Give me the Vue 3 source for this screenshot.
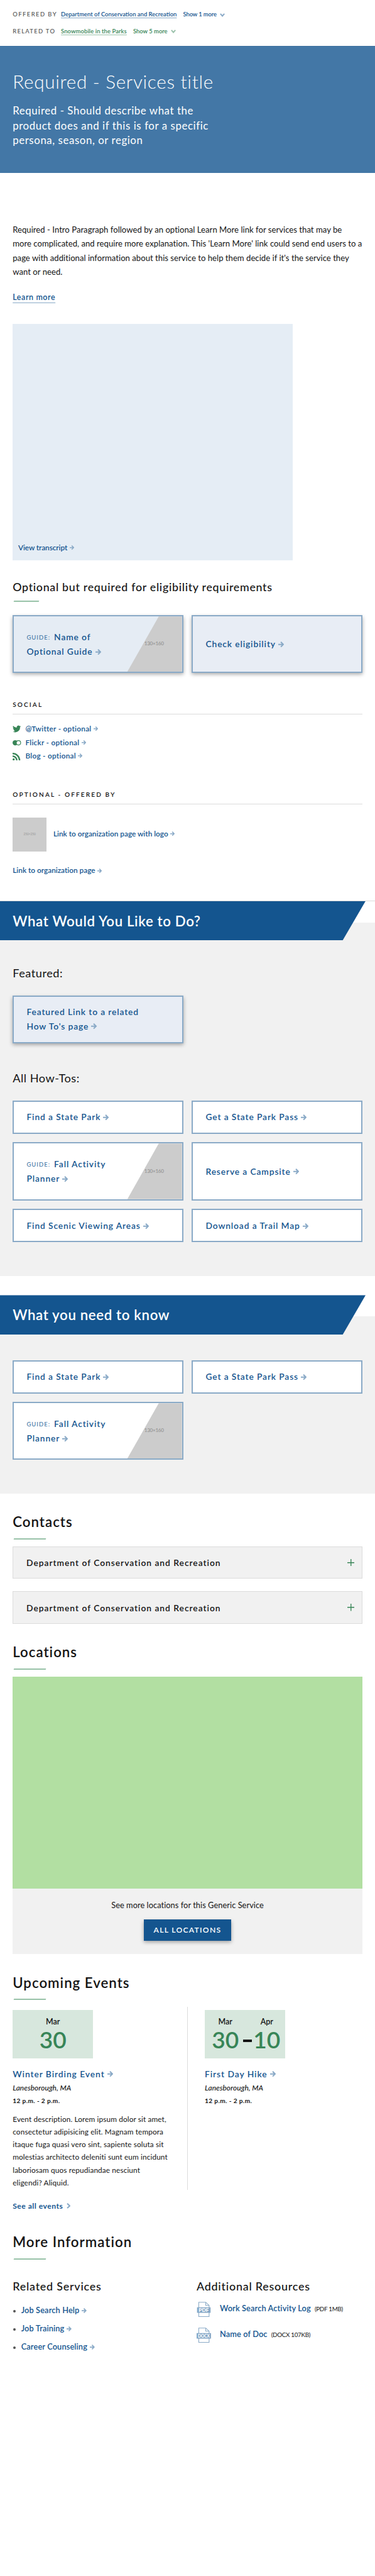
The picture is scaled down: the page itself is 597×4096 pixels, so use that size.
<script setup>
import { h } from 'vue'

const Arrow = () =>
  h('svg', { class: 'arrow', viewBox: '0 0 14 14', 'aria-hidden': 'true' }, [
    h('path', {
      d: 'M0 7H10M6 1.2L11.8 7L6 12.8',
      fill: 'none',
      stroke: '#8aaac7',
      'stroke-width': 3,
    }),
  ])

const howTos = [
  { text: 'Find a State Park' },
  { text: 'Get a State Park Pass' },
  { guide: true, lines: ['Fall Activity', 'Planner'] },
  { text: 'Reserve a Campsite' },
  { text: 'Find Scenic Viewing Areas' },
  { text: 'Download a Trail Map' },
]
const needToKnow = howTos.slice(0, 3)
const contacts = ['Department of Conservation and Recreation', 'Department of Conservation and Recreation']
const description = [
  'Event description. Lorem ipsum dolor sit amet,',
  'consectetur adipisicing elit. Magnam tempora',
  'itaque fuga quasi vero sint, sapiente soluta sit',
  'molestias architecto deleniti sunt eum incidunt',
  'laboriosam quos repudiandae nesciunt',
  'eligendi? Aliquid.',
]
const related = ['Job Search Help', 'Job Training', 'Career Counseling']
const resources = [
  { type: 'PDF', name: 'Work Search Activity Log', meta: '(PDF 1MB)' },
  { type: 'DOCX', name: 'Name of Doc', meta: '(DOCX 107KB)' },
]
</script>

<template>
  <main class="page">
    <div class="relations">
      <div class="relation">
        <span class="relation-label">OFFERED BY</span>
        <a class="relation-link">Department of Conservation and Recreation</a>
        <span class="relation-more">Show 1 more</span>
        <svg class="chev" viewBox="0 0 12 9"><path d="M1.3 1.3L6 6.6L10.7 1.3" fill="none" stroke="#8aaac7" stroke-width="3" /></svg>
      </div>
      <div class="relation green">
        <span class="relation-label">RELATED TO</span>
        <a class="relation-link">Snowmobile in the Parks</a>
        <span class="relation-more">Show 5 more</span>
        <svg class="chev" viewBox="0 0 12 9"><path d="M1.3 1.3L6 6.6L10.7 1.3" fill="none" stroke="#9bc2ab" stroke-width="3" /></svg>
      </div>
    </div>

    <header class="hero">
      <h1>Required - Services title</h1>
      <p>Required - Should describe what the<br />product does and if this is for a specific<br />persona, season, or region</p>
    </header>

    <section class="intro">
      <p class="lead">
        Required - Intro Paragraph followed by an optional Learn More link for services that may be<br />
        more complicated, and require more explanation. This 'Learn More' link could send end users to a<br />
        page with additional information about this service to help them decide if it's the service they<br />
        want or need.
      </p>
      <div class="learn"><a>Learn more</a></div>
      <div class="video"><a class="small-link transcript">View transcript<Arrow /></a></div>

      <h3 class="sub">Optional but required for eligibility requirements</h3>
      <div class="bar short"></div>
      <div class="cards lead-cards">
        <div class="card featured tinted">
          <span><small class="guide">GUIDE:</small>Name of<br />Optional Guide<Arrow /></span>
          <div class="slash"><i>130×160</i></div>
        </div>
        <div class="card featured"><span>Check eligibility<Arrow /></span></div>
      </div>

      <h4 class="caps">SOCIAL</h4>
      <ul class="social">
        <li>
          <svg viewBox="0 0 24 20"><path d="M23.6 2.6c-.9.4-1.8.6-2.7.7 1-.6 1.7-1.5 2.1-2.6-.9.5-1.9.9-3 1.2a4.8 4.8 0 0 0-8.2 4.4C7.800 6.100 4.200 4.200 1.800 1.200a4.8 4.8 0 0 0 1.5 6.4c-.8 0-1.5-.2-2.2-.6 0 2.4 1.7 4.3 3.9 4.8-.7.2-1.4.2-2.2.1.6 1.900 2.400 3.300 4.500 3.300A9.7 9.7 0 0 1 .2 17.200 13.700 13.700 0 0 0 21.200 5c1-.7 1.800-1.500 2.400-2.400z" fill="#388557" /></svg>
          <a class="small-link">@Twitter - optional<Arrow /></a>
        </li>
        <li>
          <svg viewBox="0 0 20 18"><circle cx="6.200" cy="9" r="6.200" fill="#388557" /><circle cx="14" cy="9" r="5.200" fill="#fff" stroke="#388557" stroke-width="1.700" /></svg>
          <a class="small-link">Flickr - optional<Arrow /></a>
        </li>
        <li>
          <svg viewBox="0 0 20 18"><circle cx="2.500" cy="15.500" r="2.500" fill="#388557" /><path d="M0 8a10 10 0 0 1 10 10M0 1.800A16.200 16.200 0 0 1 16.500 18" fill="none" stroke="#388557" stroke-width="3.400" /></svg>
          <a class="small-link">Blog - optional<Arrow /></a>
        </li>
      </ul>

      <h4 class="caps offered">OPTIONAL - OFFERED BY</h4>
      <div class="org">
        <div class="logo">250×250</div>
        <a class="small-link">Link to organization page with logo<Arrow /></a>
      </div>
      <div class="org-plain"><a class="small-link">Link to organization page<Arrow /></a></div>
    </section>

    <section class="band first">
      <h2 class="banner">What Would You Like to Do?</h2>
      <h3 class="group">Featured:</h3>
      <div class="cards feature-row">
        <div class="card featured tight"><span>Featured Link to a related<br />How To's page<Arrow /></span></div>
      </div>
      <h3 class="group all">All How-Tos:</h3>
      <div class="cards rows">
        <div v-for="(item, i) in howTos" :key="i" class="card">
          <template v-if="item.guide">
            <span><small class="guide">GUIDE:</small>{{ item.lines[0] }}<br />{{ item.lines[1] }}<Arrow /></span>
            <div class="slash"><i>130×160</i></div>
          </template>
          <span v-else>{{ item.text }}<Arrow /></span>
        </div>
      </div>
    </section>

    <section class="band second">
      <h2 class="banner">What you need to know</h2>
      <div class="cards rows know">
        <div v-for="(item, i) in needToKnow" :key="i" class="card">
          <template v-if="item.guide">
            <span><small class="guide">GUIDE:</small>{{ item.lines[0] }}<br />{{ item.lines[1] }}<Arrow /></span>
            <div class="slash"><i>130×160</i></div>
          </template>
          <span v-else>{{ item.text }}<Arrow /></span>
        </div>
      </div>
    </section>

    <section class="body">
      <h2 class="title">Contacts</h2>
      <div class="bar"></div>
      <div class="accordions">
        <div v-for="(name, i) in contacts" :key="i" class="accordion">
          <span>{{ name }}</span>
          <svg viewBox="0 0 17 17"><path d="M0 8.500H17M8.500 0V17" stroke="#388557" stroke-width="2" /></svg>
        </div>
      </div>

      <h2 class="title">Locations</h2>
      <div class="bar"></div>
      <div class="map"></div>
      <div class="map-foot">
        <p>See more locations for this Generic Service</p>
        <button>ALL LOCATIONS</button>
      </div>

      <h2 class="title">Upcoming Events</h2>
      <div class="bar"></div>
      <div class="events">
        <article>
          <div class="date single">
            <div class="day"><b>Mar</b><strong>30</strong></div>
          </div>
          <h5 class="event-name">Winter Birding Event<Arrow /></h5>
          <p class="place">Lanesborough, MA</p>
          <p class="time">12 p.m. - 2 p.m.</p>
          <p class="desc"><template v-for="line in description" :key="line">{{ line }}<br /></template></p>
        </article>
        <article>
          <div class="date">
            <div class="day"><b>Mar</b><strong>30</strong></div>
            <div class="dash"></div>
            <div class="day to"><b>Apr</b><strong>10</strong></div>
          </div>
          <h5 class="event-name">First Day Hike<Arrow /></h5>
          <p class="place">Lanesborough, MA</p>
          <p class="time">12 p.m. - 2 p.m.</p>
        </article>
      </div>
      <div class="see-all">
        See all events
        <svg viewBox="0 0 10 13"><path d="M1.500 1L7.500 6.500L1.500 12" fill="none" stroke="#8aaac7" stroke-width="3" /></svg>
      </div>

      <h2 class="title more">More Information</h2>
      <div class="bar"></div>
      <div class="info">
        <div>
          <h3 class="col-title">Related Services</h3>
          <ul class="related">
            <li v-for="r in related" :key="r">{{ r }}<Arrow /></li>
          </ul>
        </div>
        <div>
          <h3 class="col-title">Additional Resources</h3>
          <div v-for="r in resources" :key="r.name" class="resource">
            <svg viewBox="0 0 34 36">
              <path d="M5 14V1H21.500L29.500 8.500V14M21.500 1V8.500H29.500M5 25V35H29.500V25" fill="none" stroke="#8aaac7" stroke-width="1.600" />
              <rect :x="r.type === 'PDF' ? 1 : 0" y="13" :width="r.type === 'PDF' ? 32 : 34" height="13" fill="#86a8c7" />
              <text x="17" y="23.500" text-anchor="middle" :textLength="r.type === 'PDF' ? 24 : 28" lengthAdjust="spacingAndGlyphs">{{ r.type }}</text>
            </svg>
            <a>{{ r.name }}</a><span>{{ r.meta }}</span>
          </div>
        </div>
      </div>
    </section>
  </main>
</template>

<style>
html,
body {
  margin: 0;
  background: #fff;
}
</style>

<style scoped>
.page {
  zoom: 0.67435;
  width: 100%;
  height: 6074px;
  overflow: hidden;
  font-family: Lato, "Open Sans", sans-serif;
  color: #141414;
  white-space: nowrap;
}
.page * {
  box-sizing: border-box;
}
h1, h2, h3, h4, h5, p, ul {
  margin: 0;
  padding: 0;
}
ul {
  list-style: none;
}

.relations {
  height: 108px;
  padding: 15.500px 30px 0;
}
.relation {
  display: flex;
  height: 38.700px;
  font-size: 14px;
  line-height: 38.700px;
  font-weight: 600;
  color: #14558f;
}
.relation.green {
  color: #388557;
}
.relation-label {
  width: 114px;
  font-weight: 500;
  letter-spacing: 2.130px;
  color: #535353;
}
.green .relation-label {
  letter-spacing: 1.900px;
}
.relation-link {
  line-height: 37.500px;
  text-decoration: underline 1px #8aaac7;
  text-underline-offset: 3px;
  text-decoration-skip-ink: none;
}
.green .relation-link {
  letter-spacing: 0.130px;
  text-decoration-color: #9bc2ab;
}
.relation-more {
  margin-left: 15px;
  letter-spacing: -0.200px;
}
.green .relation-more {
  letter-spacing: 0;
}
.chev {
  width: 12px;
  height: 9px;
  margin: 15px 0 0 8px;
}

.hero {
  height: 300px;
  padding: 61.300px 30px 0;
  border-top: 1px solid #3c6f9e;
  background: #4377a6;
  color: #fff;
}
h1 {
  font-size: 44px;
  line-height: 44px;
  font-weight: 300;
  letter-spacing: 1.040px;
}
.hero p {
  margin-top: 28.800px;
  font-size: 25px;
  line-height: 35px;
  font-weight: 400;
  letter-spacing: 0.860px;
}

.intro {
  height: 1715px;
  padding: 117.300px 30px 0;
}
.lead {
  font-size: 19.500px;
  line-height: 33px;
  font-weight: 400;
  letter-spacing: 0.020px;
}
.learn {
  margin-top: 28px;
  font-size: 18.500px;
  line-height: 33px;
  font-weight: 600;
  letter-spacing: 0.870px;
  color: #14558f;
}
.learn a {
  text-decoration: underline 1px #8aaac7;
  text-underline-offset: 6px;
}
.video {
  display: flex;
  align-items: flex-end;
  width: 661px;
  height: 557px;
  margin-top: 45.700px;
  padding: 0 0 17.500px 13px;
  background: #e5edf5;
}
.small-link {
  font-size: 17.500px;
  line-height: 22px;
  font-weight: 600;
  letter-spacing: 0.020px;
  color: #14558f;
}
.small-link.transcript {
  letter-spacing: -0.120px;
}
.arrow {
  display: inline-block;
  width: 11px;
  height: 11px;
  margin-left: 5px;
  vertical-align: 0.500px;
}
.sub {
  margin-top: 47.800px;
  font-size: 26.400px;
  line-height: 30px;
  font-weight: 500;
  letter-spacing: 1.050px;
}
.bar {
  width: 75px;
  height: 3px;
  margin: 17.100px 0 16px 2px;
  background: #98c2a8;
  transform: skewX(-20deg);
}
.bar.short {
  width: 60px;
  margin-bottom: 32px;
}

.cards {
  display: grid;
  grid-template-columns: 1fr 1fr;
  gap: 20px;
}
.lead-cards {
  grid-auto-rows: 136px;
}
.card {
  position: relative;
  display: flex;
  align-items: center;
  padding-left: 30px;
  border: 3px solid #8aaac7;
  background: #fff;
  font-size: 20.500px;
  line-height: 35px;
  font-weight: 600;
  letter-spacing: 1.300px;
  color: #14558f;
}
.card .arrow,
.event-name .arrow {
  width: 14px;
  height: 14px;
  margin-left: 6px;
  vertical-align: 0;
}
.card.featured {
  background: #e8edf5;
  box-shadow: 0 4px 9px rgba(0, 0, 0, 0.35);
}
.card.tinted {
  background: #e5ecf4;
}
.card.tight {
  line-height: 33px;
}
.guide {
  margin-right: 9px;
  font-size: 14px;
  font-weight: 500;
  letter-spacing: 1.500px;
  color: #4377a6;
  vertical-align: 1px;
  line-height: 1;
}
.slash {
  position: absolute;
  top: 0;
  right: 0;
  bottom: 0;
  width: 129px;
  padding-left: 40px;
  display: flex;
  align-items: center;
  background: #ccc;
  clip-path: polygon(57.400% 0, 100% 0, 100% 100%, 0 100%);
}
.slash i {
  font-size: 12px;
  font-style: normal;
  font-weight: 600;
  letter-spacing: -0.400px;
  color: #969696;
}

.caps {
  margin-top: 64.900px;
  padding-bottom: 11.700px;
  border-bottom: 2px solid #dcdcdc;
  font-size: 15px;
  line-height: 20px;
  font-weight: 600;
  letter-spacing: 3.100px;
}
.caps.offered {
  margin-top: 64px;
}
.social {
  margin-top: 18.500px;
}
.social li {
  display: flex;
  align-items: center;
  height: 32px;
}
.social li > svg {
  width: 20px;
  height: 18px;
  margin-right: 10px;
}
.social .small-link {
  letter-spacing: 0.410px;
}
.org {
  display: flex;
  align-items: center;
  gap: 16px;
  margin-top: 30.700px;
}
.logo {
  width: 80px;
  height: 80px;
  background: #ccc;
  color: #969696;
  font-size: 7px;
  line-height: 80px;
  text-align: center;
}
.org-plain {
  margin-top: 35.200px;
}

.band {
  padding: 0 30px;
  background: linear-gradient(#fff 51px, #f1f1f1 51px);
}
.band.first {
  height: 886px;
  border-top: 1px solid #dcdcdc;
}
.band.second {
  height: 468px;
  margin-top: 45px;
}
.banner {
  width: 863px;
  height: 93px;
  margin: 0 0 0 -30px;
  padding-left: 30px;
  background: #14558f;
  clip-path: polygon(0 0, 100% 0, calc(100% - 54px) 100%, 0 100%);
  font-size: 33px;
  line-height: 95px;
  font-weight: 600;
  letter-spacing: 0.950px;
  color: #fff;
}
.group {
  margin-top: 62.300px;
  font-size: 27px;
  line-height: 30px;
  font-weight: 400;
  letter-spacing: 0.750px;
}
.group.all {
  margin-top: 67.600px;
}
.feature-row {
  margin-top: 37.700px;
  grid-auto-rows: 112px;
}
.rows {
  margin-top: 37.400px;
  grid-template-rows: 79px 137px 79px;
}
.rows.know {
  margin-top: 60px;
  grid-template-rows: 79px 136px;
}

.body {
  padding: 0 30px;
}
.title {
  margin-top: 47.900px;
  font-size: 33px;
  line-height: 40px;
  font-weight: 600;
  letter-spacing: 1.500px;
}
.accordions {
  display: grid;
  gap: 30px;
}
.accordion {
  display: flex;
  align-items: center;
  justify-content: space-between;
  height: 76.500px;
  padding: 0 17px 0 31px;
  border: 2px solid #dcdcdc;
  background: #f1f1f1;
  font-size: 20.500px;
  font-weight: 600;
  letter-spacing: 1.450px;
}
.accordion svg {
  width: 17px;
  height: 17px;
}
.map {
  height: 500px;
  background: #b2dfa2;
}
.map-foot {
  height: 155px;
  padding-top: 27.600px;
  background: #f1f1f1;
  text-align: center;
}
.map-foot p {
  font-size: 19px;
  line-height: 24px;
  font-weight: 400;
  letter-spacing: 0.090px;
}
button {
  width: 205px;
  height: 50px;
  margin-top: 21.400px;
  padding: 0;
  border: 0;
  background: #14558f;
  box-shadow: 0 4px 9px rgba(0, 0, 0, 0.35);
  font: 600 18px/50px Lato, sans-serif;
  letter-spacing: 1.910px;
  color: #fff;
}

.events {
  display: grid;
  grid-template-columns: 412px 1fr;
  height: 431px;
}
.events article {
  padding-top: 8px;
}
.events article + article {
  padding-left: 40px;
  border-left: 1px solid #dcdcdc;
}
.date {
  display: flex;
  width: 190px;
  height: 114px;
  padding: 15.600px 0 0 15px;
  background: #d7e7dd;
}
.date.single {
  justify-content: center;
  padding-left: 0;
}
.day {
  display: flex;
  flex-direction: column;
  align-items: center;
  width: 67px;
}
.day.to {
  width: 57px;
}
.day b {
  font-size: 18.500px;
  line-height: 24px;
  font-weight: 600;
}
.day strong {
  margin-top: 4.800px;
  font-size: 55px;
  line-height: 50px;
  font-weight: 600;
  color: #388557;
}
.dash {
  width: 20px;
  height: 6px;
  margin: 53px 7px 0 9px;
  background: #141414;
}
.event-name {
  margin-top: 24.800px;
  font-size: 20.500px;
  line-height: 24px;
  font-weight: 600;
  letter-spacing: 1.400px;
  color: #14558f;
}
.place {
  margin-top: 8.400px;
  font-size: 17.500px;
  line-height: 24px;
  font-weight: 500;
  font-style: italic;
  letter-spacing: 0.100px;
}
.time {
  margin-top: 9px;
  font-size: 15px;
  line-height: 20px;
  font-weight: 700;
  letter-spacing: 0.560px;
}
.desc {
  margin-top: 18px;
  font-size: 17.500px;
  line-height: 30px;
  font-weight: 400;
  letter-spacing: 0.190px;
}
.see-all {
  display: flex;
  align-items: center;
  margin-top: 26.700px;
  font-size: 18px;
  line-height: 24px;
  font-weight: 700;
  letter-spacing: 0.720px;
  color: #14558f;
}
.see-all svg {
  width: 10px;
  height: 13px;
  margin-left: 8px;
}
.title.more {
  margin-top: 54.500px;
}
.info {
  display: grid;
  grid-template-columns: 434px 1fr;
  margin-top: 47.700px;
}
.col-title {
  font-size: 26.600px;
  line-height: 30px;
  font-weight: 500;
  letter-spacing: 1.150px;
}
.related {
  margin-top: 20.800px;
}
.related li {
  display: flex;
  align-items: center;
  font-size: 19px;
  line-height: 43px;
  font-weight: 600;
  letter-spacing: 0.180px;
  color: #14558f;
}
.related li::before {
  content: "";
  width: 6px;
  height: 6px;
  margin: 3px 13px 0 1px;
  border-radius: 50%;
  background: #535353;
}
.related .arrow {
  width: 12px;
  height: 12px;
  margin-left: 6px;
}
.resource {
  display: flex;
  align-items: flex-start;
  height: 36px;
  margin-top: 21.300px;
  font-size: 19px;
  line-height: 31px;
  font-weight: 600;
  letter-spacing: 0.170px;
  color: #14558f;
}
.resource + .resource {
  margin-top: 25.300px;
}
.resource svg {
  width: 34px;
  height: 36px;
  margin-right: 21px;
}
.resource text {
  font: 900 11px Lato, sans-serif;
  fill: #fff;
  letter-spacing: 0;
}
.resource span {
  margin-left: 9px;
  font-size: 14.500px;
  line-height: 34px;
  font-weight: 400;
  letter-spacing: -0.400px;
  color: #141414;
}
</style>
